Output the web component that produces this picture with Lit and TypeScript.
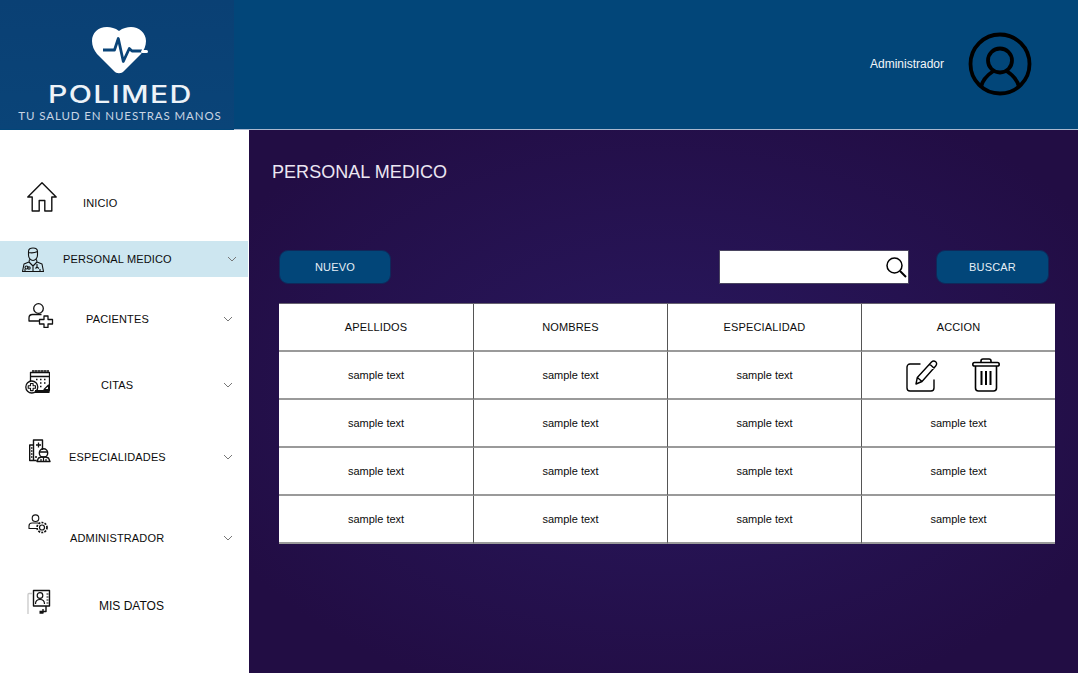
import { LitElement, html, css, svg } from "lit";
import { customElement } from "lit/decorators.js";
import { classMap } from "lit/directives/class-map.js";
import { styleMap } from "lit/directives/style-map.js";

const icons = {
  home: svg`<svg width="30" height="30" viewBox="0 0 30 30"><path stroke-width="1.400" d="M15 .8 .8 15h4.400v14h7V18.500h5.600V29h7V15h4.400Z"/></svg>`,
  doctor: svg`<svg width="22" height="25" viewBox="0 0 22 25"><path d="M6.500 4.500C6.500 2 8.500 1 11 1s4.500 1 4.500 3.500V8c0 3-2 5.500-4.500 5.500S6.500 11 6.500 8ZM6.500 5.500c2 .5 6 .5 9-1M7.500 12.500 7 15l-5 2-1.500 7.500h21L20 17l-5-2-.5-2.500M7 15l4 4 4-4M11 19v5.500"/><circle cx="4.500" cy="20.500" r="1.500"/><circle cx="7" cy="21" r="1.200"/><path d="M15 17v3l-1.500 1.500M15 20l2 1.500M3 24v-2M18 24v-2"/></svg>`,
  patient: svg`<svg width="26" height="25" viewBox="0 0 26 25"><circle cx="10.500" cy="5.500" r="4.800" stroke-width="1.300"/><path stroke-width="1.300" d="M12 18H1v-3c0-2 1.500-3.500 3.500-3.500h9M16 13h4v3.500h4.500V21H20v3.500h-4V21h-4.500v-4.500H16Z"/></svg>`,
  calendar: svg`<svg width="25" height="26" viewBox="0 0 25 26"><path d="M5.500 12V3.500h19V20.500a2 2 0 0 1-2 2H10.500M5.500 7.500h19" stroke-width="1.300"/><path d="M8 1v3M11 1v3M14 1v3M17 1v3M20 1v3M23 1v3M7 2h17" stroke-width="1.100"/><path d="M11 10.500h2M15 10.500h2M19 10.500h2M15 14h2M19 14h2M15 17.500h2" stroke-width="1.400" stroke-dasharray="1.500 .6"/><path d="M19 20.500 23.500 16v4.500ZM10 21.500h14v2H10" stroke-width="1.100"/><circle cx="6.800" cy="18" r="6" stroke-width="1.300"/><path d="M5.500 14.500h2.600v2.300h2.400v2.500H8.100v2.300H5.500v-2.300H3.200v-2.500h2.300Z" stroke-width="1.100"/></svg>`,
  clinic: svg`<svg width="22" height="24" viewBox="0 0 22 24"><path d="M4.500 21.500V1h9v10M4.500 21.500H.7V6h3.800M.7 21.500h7" stroke-width="1.400"/><path d="M9.500 3.500v5M7 6h5M2 9h1.500M2 12h1.500M2 15h1.500M2 18h1.500M6 18h2" stroke-width="1.300"/><circle cx="14.500" cy="14" r="4.200" stroke-width="1.400"/><path d="M10.200 13h8.600M8 22.500l1.500-3.500 3-1h4l3 1 1.500 3.500Z" stroke-width="1.400"/><path d="M12 22v-2M14.500 22v-3M17 22v-2" stroke-width="1.200"/></svg>`,
  admin: svg`<svg width="20" height="20" viewBox="0 0 20 20"><circle cx="7.500" cy="4.200" r="3.300" stroke-width="1.100"/><path stroke-width="1.100" d="M10 14.500H1v-2.500c0-1.800 1.300-3 3-3h6.500"/><circle cx="14" cy="13.500" r="2.500" stroke-width="1.200"/><circle cx="14" cy="13.500" r="5" stroke-width="1.700" stroke-dasharray="2 1.200"/></svg>`,
  profile: svg`<svg width="24" height="26" viewBox="0 0 24 26"><path d="M6.500 1.500h16v15.500H6.500ZM19 17v5.500h-6.500M16 20v4h-3.500" stroke-width="1.400"/><circle cx="13" cy="6.500" r="2.800" stroke-width="1.200"/><path stroke-width="1.200" d="M8.500 15c0-3 2-4.500 4.500-4.500s4.500 1.500 4.500 4.500M19.500 5h2M19.500 8h2M19.500 11h2M19.500 14h2"/><path d="M5 4.500H2c-.8 0-1 .5-1 1V25" stroke="#c9c9c9" stroke-width="1.300"/></svg>`
};

const menu = [
  { label: "INICIO", icon: icons.home, top: 55, iconX: 27, labelX: 83, dy: -6, chevron: false },
  { label: "PERSONAL MEDICO", icon: icons.doctor, top: 20, iconX: 22, labelX: 63, dy: 0, chevron: true, active: true },
  { label: "PACIENTES", icon: icons.patient, top: 24, iconX: 28, labelX: 86, dy: -4, chevron: true },
  { label: "CITAS", icon: icons.calendar, top: 30, iconX: 25, labelX: 101, dy: -3, chevron: true },
  { label: "ESPECIALIDADES", icon: icons.clinic, top: 36, iconX: 29, labelX: 69, dy: -6, chevron: true },
  { label: "ADMINISTRADOR", icon: icons.admin, top: 45, iconX: 28, labelX: 70, dy: -14, chevron: true },
  { label: "MIS DATOS", icon: icons.profile, top: 32, iconX: 27, labelX: 99, dy: -4, chevron: false, large: true }
];

const columns = ["APELLIDOS", "NOMBRES", "ESPECIALIDAD", "ACCION"];

@customElement("app-root")
export class AppRoot extends LitElement {
  static styles = css`
    :host {
      display: block;
      width: 1078px;
      height: 673px;
      overflow: hidden;
      font-family: "Liberation Sans", Arial, sans-serif;
      background: #fff;
    }

    .top {
      display: flex;
      height: 130px;
      background: #024679;
    }

    .brand {
      flex: 0 0 234px;
      height: 129px;
      display: flex;
      flex-direction: column;
      align-items: center;
      padding: 27px 0 0 6px;
      box-sizing: border-box;
      background: linear-gradient(180deg, #0a4074 0%, #0a4478 100%);
      color: #eef3f8;
    }

    .brand svg {
      display: block;
    }

    .brand-name {
      margin-top: 9px;
      font-family: Inter, sans-serif;
      font-size: 24px;
      line-height: 24px;
      font-weight: 500;
      letter-spacing: 1px;
      transform: scaleX(1.26);
    }

    .brand-tag {
      margin-top: 2px;
      font-family: Lato, sans-serif;
      font-size: 11.5px;
      line-height: 14px;
      letter-spacing: 0.9px;
      color: #c9d6e4;
      white-space: nowrap;
    }

    .user {
      flex: 1;
      display: flex;
      align-items: center;
      justify-content: flex-end;
      gap: 24px;
      padding: 0 46px 1px 0;
      box-sizing: border-box;
      height: 130px;
      border-bottom: 1px solid #a9b8cf;
      color: #f2f6fa;
      font-size: 12px;
    }

    .user svg {
      display: block;
    }

    .body {
      display: flex;
      height: 543px;
    }

    nav {
      flex: 0 0 249px;
      display: flex;
      flex-direction: column;
      align-items: flex-start;
    }

    .item {
      display: flex;
      align-items: center;
      width: 248px;
      height: 36px;
      font-size: 11px;
      letter-spacing: 0.15px;
      color: #0c0c0c;
      white-space: nowrap;
    }

    .item.active {
      background: #cde6f0;
    }

    .item.large {
      font-size: 12px;
      letter-spacing: 0;
    }

    .slot {
      flex: none;
      display: flex;
      align-items: center;
    }

    .slot svg {
      display: block;
      fill: none;
      stroke: #111;
      stroke-width: 1.100;
      stroke-linejoin: round;
    }

    .chevron {
      margin-left: auto;
      margin-right: 15px;
      fill: none;
      stroke: #777;
      stroke-width: 1;
    }

    .active .chevron {
      margin-right: 11px;
    }

    main {
      flex: 1;
      padding: 32px 23px 0;
      background: radial-gradient(ellipse 60% 60% at 50% 48%, #29185f 0%, #220d44 100%);
    }

    h1 {
      margin: 0;
      font-size: 18px;
      line-height: 20px;
      font-weight: 400;
      letter-spacing: 0.05px;
      color: #ece6f2;
    }

    .toolbar {
      display: flex;
      align-items: center;
      margin: 68px 6px 19px 7px;
    }

    button {
      width: 113px;
      height: 34px;
      border: 1px solid #10285a;
      border-radius: 9px;
      background: #024679;
      color: #e6eef6;
      font: 11px "Liberation Sans", Arial, sans-serif;
      letter-spacing: 0.2px;
    }

    button.new {
      width: 112px;
    }

    .search {
      position: relative;
      margin: 0 27px 0 auto;
    }

    input {
      display: block;
      width: 190px;
      height: 34px;
      box-sizing: border-box;
      border: 1px solid #4a4560;
      background: #fff;
    }

    .search svg {
      position: absolute;
      top: 7px;
      right: 2px;
    }

    .table {
      display: grid;
      grid-template-columns: repeat(4, 194px);
      grid-auto-rows: 48px;
      margin-left: 7px;
      background: #fff;
      border-top: 1px solid #66616f;
      color: #0c0c0c;
    }

    .cell {
      display: flex;
      align-items: center;
      justify-content: center;
      box-sizing: border-box;
      border-left: 1px solid #555;
      border-bottom: 2px solid #9a9a9a;
      font-size: 11px;
    }

    .cell:nth-child(4n + 1) {
      border-left: none;
    }

    .cell.head {
      letter-spacing: 0.15px;
    }

    .actions {
      justify-content: flex-start;
      gap: 34px;
      padding-left: 44px;
    }

    .actions svg {
      display: block;
    }
  `;

  renderBrand() {
    return html`
      <div class="brand">
        <svg width="56" height="47" viewBox="0 0 56 47">
          <path fill="#fff" d="M27 4C23 1 19 0 15 0 6 0 0 6 0 14c0 5 2 9 5 13l17 17c2.500 3 7.500 3 10 0l17-17c3-4 5-8 5-13C54 6 47 0 39 0 35 0 31 1 27 4Z"/>
          <path fill="none" stroke="#0a4478" stroke-width="2.800" stroke-linejoin="round" d="M11 23H22.500L26.300 11.500 31.300 34.500 37.300 21.500 40 24H50"/>
          <path stroke="#fff" stroke-width="3" stroke-linecap="round" d="M50.500 24.500H54.500"/>
        </svg>
        <div class="brand-name">POLIMED</div>
        <div class="brand-tag">TU SALUD EN NUESTRAS MANOS</div>
      </div>
    `;
  }

  renderMenu() {
    return menu.map((item) => html`
      <div class=${classMap({ item: true, active: !!item.active, large: !!item.large })} style=${styleMap({ marginTop: `${item.top}px` })}>
        <span class="slot" style=${styleMap({ width: `${item.labelX}px` })}>
          <span style=${styleMap({ marginLeft: `${item.iconX}px`, transform: `translateY(${item.dy}px)` })}>${item.icon}</span>
        </span>
        <span>${item.label}</span>
        ${item.chevron ? html`<svg class="chevron" width="10" height="6" viewBox="0 0 10 6"><path d="M1 1l4 4 4-4"/></svg>` : ""}
      </div>
    `);
  }

  renderRow(row: number) {
    return columns.map((_, col) => {
      if (row === 0 && col === 3) {
        return html`
          <div class="cell actions">
            <svg width="32" height="33" viewBox="0 0 32 33" fill="none" stroke="#000" stroke-width="1.400" stroke-linejoin="round">
              <path stroke-linecap="round" d="M14 5H4a3 3 0 0 0-3 3v21a3 3 0 0 0 3 3h21a3 3 0 0 0 3-3v-8"/>
              <path d="M10 25l1.300-6.500L25.500 3c1.300-1.300 3-1.300 4.200-.2s1.300 2.800 0 4.200L16 22.500ZM11.300 18.500l4.700 4M23.500 5l5 4.500"/>
            </svg>
            <svg width="28" height="34" viewBox="0 0 28 34" fill="none" stroke="#000" stroke-width="1.600" stroke-linejoin="round">
              <path d="M9 4.500V3c0-1 .8-2 2-2h6c1.200 0 2 1 2 2v1.500M2.500 4.500h23c1 0 1.700.7 1.700 1.700S26.500 8 25.500 8h-23C1.500 8 .8 7.200.8 6.200S1.500 4.500 2.500 4.500ZM3.500 8v22c0 2 1 3 3 3h15c2 0 3-1 3-3V8"/>
              <path stroke-width="2" d="M9.500 13v14M14 13v14M18.500 13v14"/>
            </svg>
          </div>
        `;
      }
      return html`<div class="cell">sample text</div>`;
    });
  }

  render() {
    return html`
      <div class="top">
        ${this.renderBrand()}
        <div class="user">
          <span>Administrador</span>
          <svg width="64" height="64" viewBox="0 0 64 64" fill="none" stroke="#000" stroke-width="3.800">
            <circle cx="32" cy="32" r="29.500"/>
            <circle cx="32" cy="28.500" r="12"/>
            <path d="M12.700 55.500C14.500 47.500 20 42.500 25.500 39M51.300 55.500C49.500 47.500 44 42.500 38.500 39"/>
          </svg>
        </div>
      </div>
      <div class="body">
        <nav>${this.renderMenu()}</nav>
        <main>
          <h1>PERSONAL MEDICO</h1>
          <div class="toolbar">
            <button class="new">NUEVO</button>
            <div class="search">
              <input type="text" />
              <svg width="21" height="21" viewBox="0 0 21 21" fill="none" stroke="#000">
                <circle cx="8.500" cy="8.500" r="7.500" stroke-width="1.500"/>
                <path stroke-width="2" d="M14 14l6 6"/>
              </svg>
            </div>
            <button>BUSCAR</button>
          </div>
          <div class="table">
            ${columns.map((name) => html`<div class="cell head">${name}</div>`)}
            ${[0, 1, 2, 3].map((row) => this.renderRow(row))}
          </div>
        </main>
      </div>
    `;
  }
}
